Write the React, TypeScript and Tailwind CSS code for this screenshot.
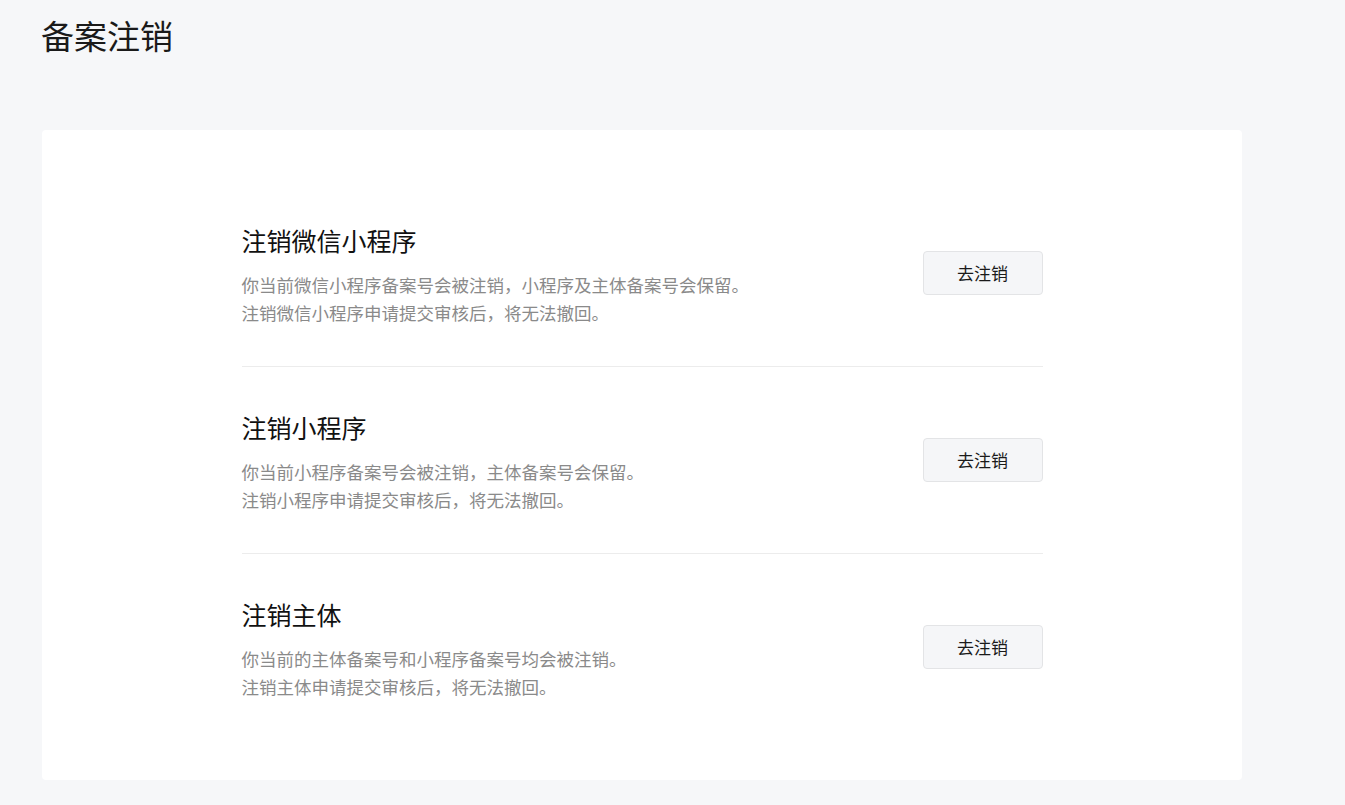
const sections = [
  {
    title: '注销微信小程序',
    lines: ['你当前微信小程序备案号会被注销，小程序及主体备案号会保留。', '注销微信小程序申请提交审核后，将无法撤回。'],
  },
  {
    title: '注销小程序',
    lines: ['你当前小程序备案号会被注销，主体备案号会保留。', '注销小程序申请提交审核后，将无法撤回。'],
  },
  {
    title: '注销主体',
    lines: ['你当前的主体备案号和小程序备案号均会被注销。', '注销主体申请提交审核后，将无法撤回。'],
  },
];

export default function App() {
  return (
    <div
      className="min-h-[805px] bg-[#f6f7f9] pl-[41px] pt-[13px] pb-[25px]"
      style={{ fontFamily: '"Microsoft YaHei", "Noto Sans CJK SC", "Noto Sans", sans-serif' }}
    >
      <h1 className="text-[33px] leading-[44px] text-[#1a1a1a] font-normal">备案注销</h1>

      <div className="mt-[73px] ml-[1px] w-[1200px] rounded-[4px] bg-white pt-[50px] pb-[40px]">
        <div className="mx-auto w-[801px]">
          {sections.map((s, i) => (
            <div
              key={s.title}
              className={
                'flex items-center justify-between pt-[44px] pb-[39px] ' +
                (i < sections.length - 1 ? 'border-b border-[#ececec]' : '')
              }
            >
              <div>
                <div className="text-[25px] leading-[32px] text-[#111]">{s.title}</div>
                <div className="mt-[15px] text-[17.5px] leading-[28px] text-[#8a8a8a]">
                  {s.lines.map((l) => (
                    <p key={l}>{l}</p>
                  ))}
                </div>
              </div>
              <button className="mb-[5px] h-[44px] w-[120px] rounded-[4px] border border-[#e3e4e6] bg-[#f5f6f8] text-[17px] text-[#1a1a1a]">
                去注销
              </button>
            </div>
          ))}
        </div>
      </div>
    </div>
  );
}
